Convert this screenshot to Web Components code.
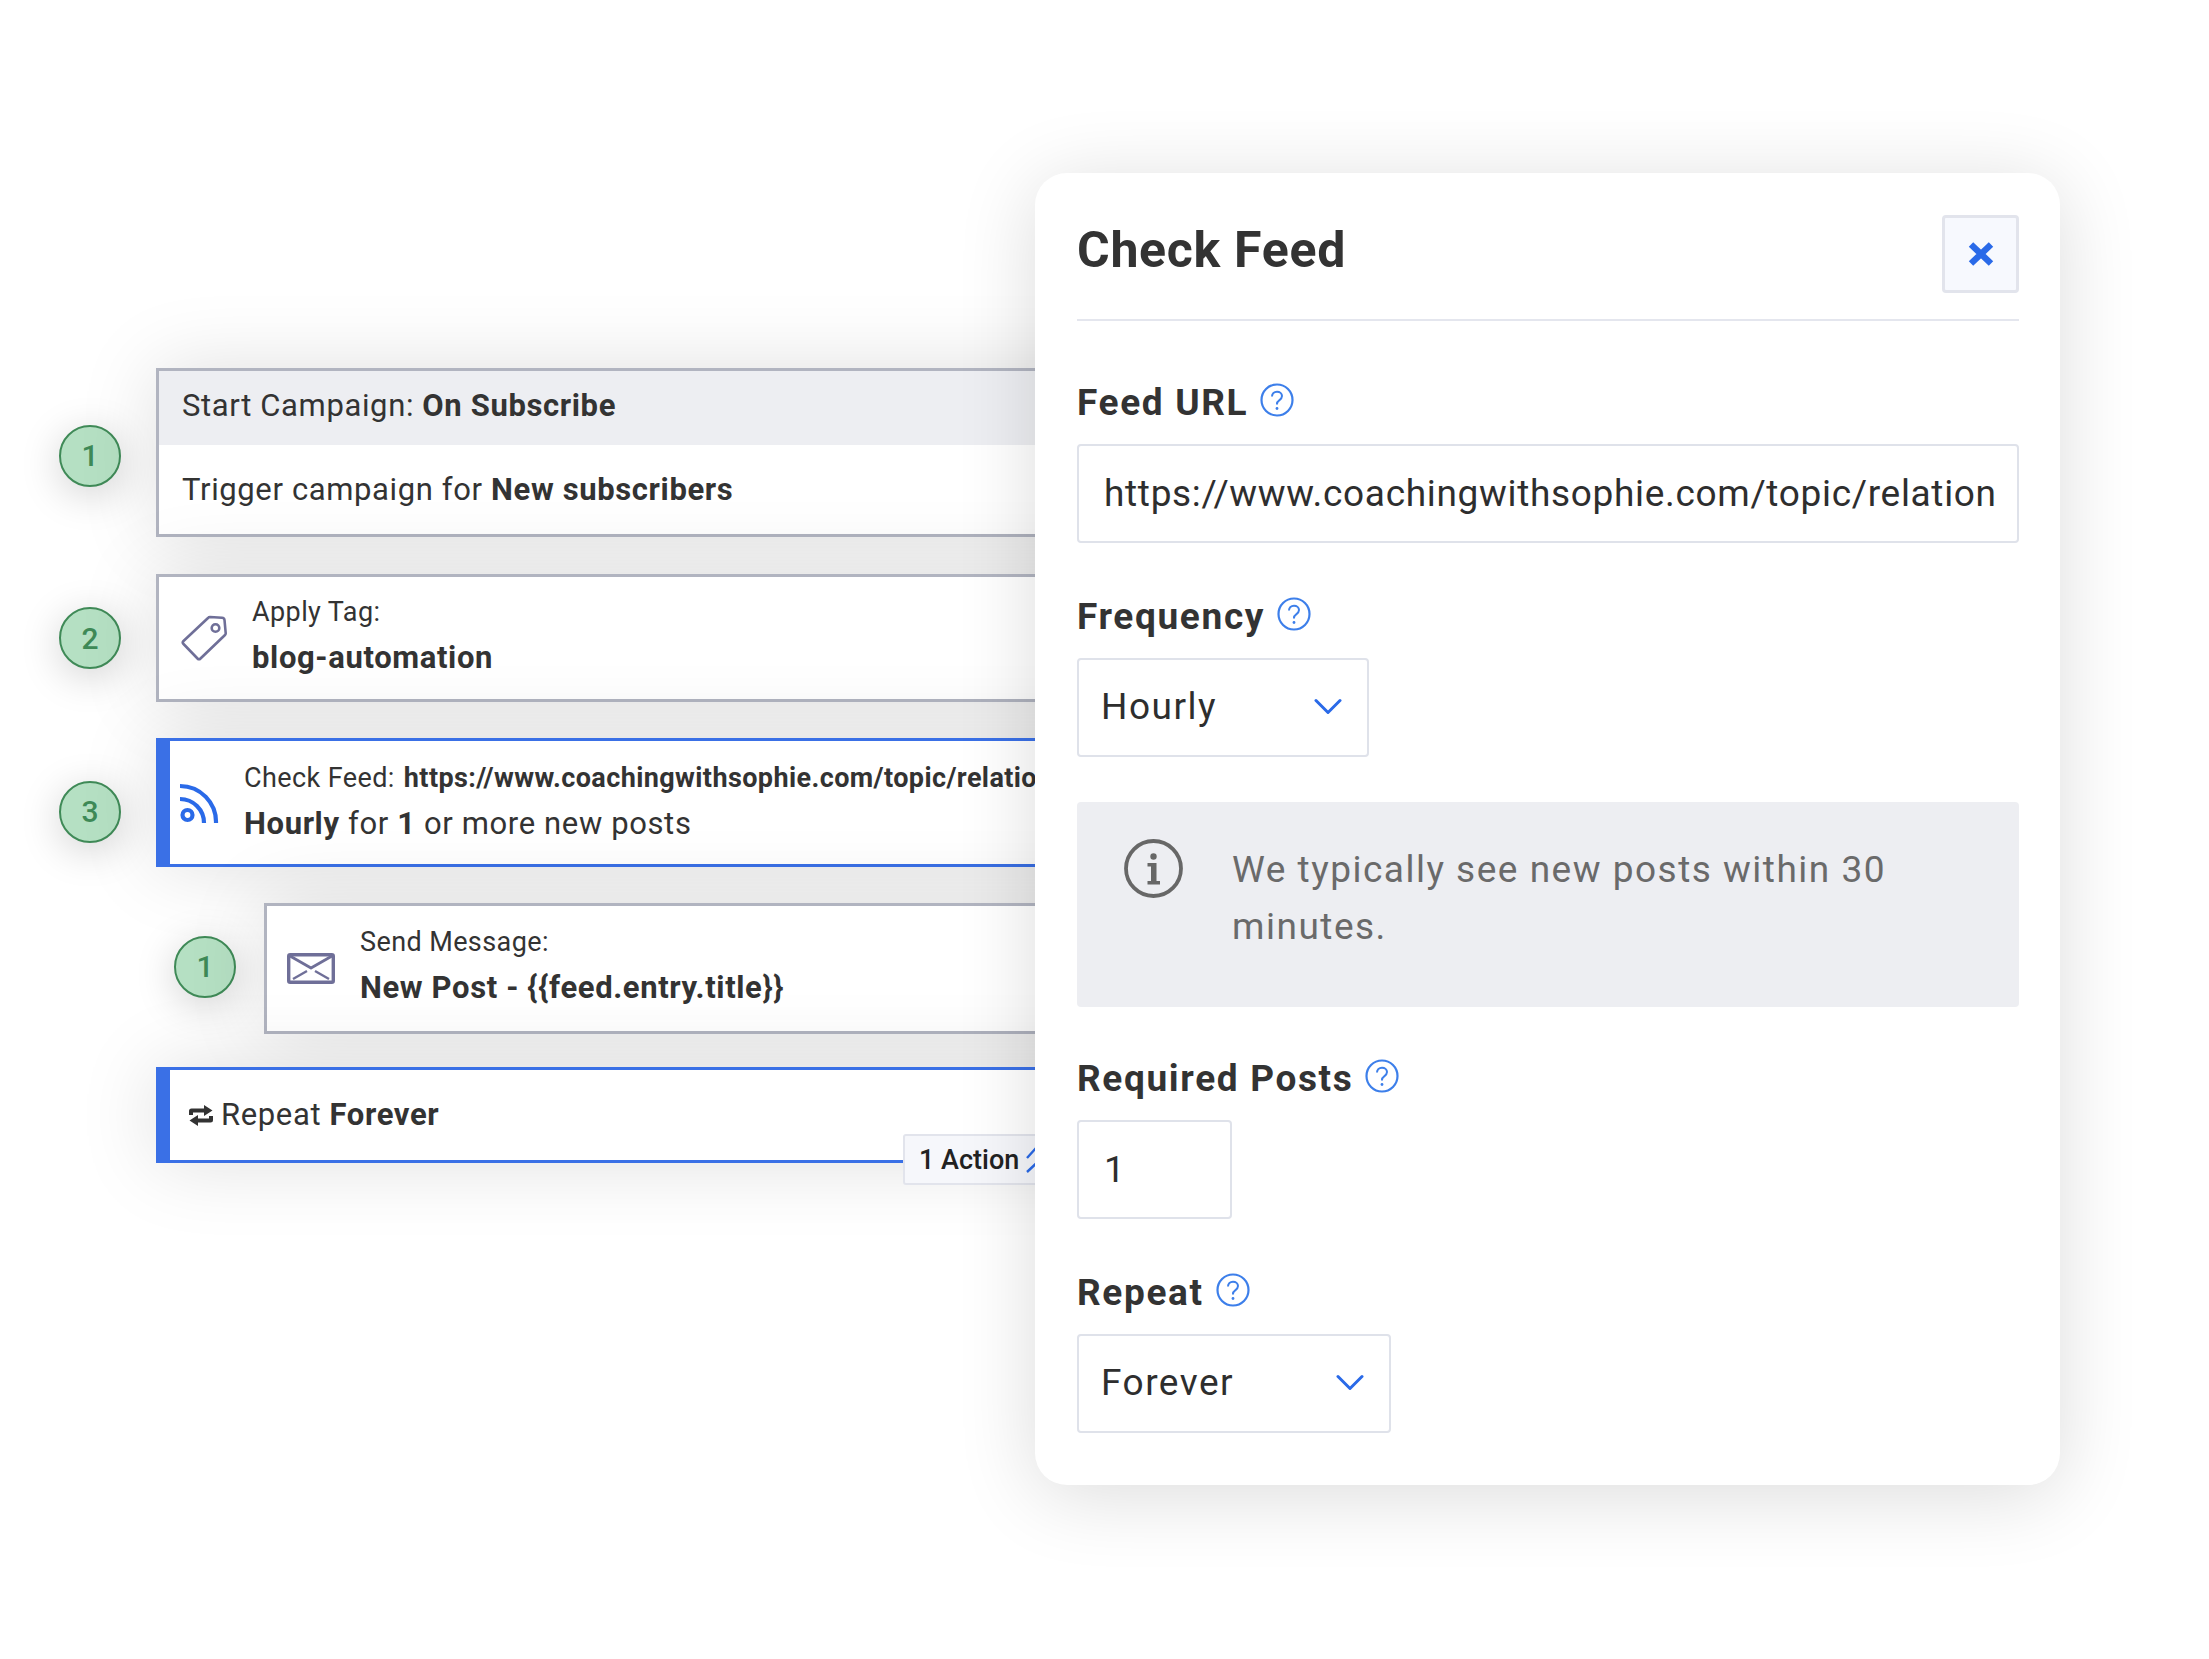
<!DOCTYPE html>
<html>
<head>
<meta charset="utf-8">
<title>Check Feed</title>
<style>
  html, body { margin: 0; background: #fff; }
  body { font-family: Roboto, "Liberation Sans", sans-serif; color: #333; overflow: hidden; }
</style>
</head>
<body>

<flow-canvas>
  <flow-step slot="flow" num="1" shift="3">
    <flow-card height="169" flush>
      <flow-band>Start Campaign: <b>On Subscribe</b></flow-band>
      <flow-text>Trigger campaign for <b>New subscribers</b></flow-text>
    </flow-card>
  </flow-step>
  <flow-step slot="flow" num="2" gap="37">
    <flow-card height="128" icon="tag" lift="7">
      <flow-line size="27">Apply Tag:</flow-line>
      <flow-line size="31" strong>blog-automation</flow-line>
    </flow-card>
  </flow-step>
  <flow-step slot="flow" num="3" gap="36" shift="9">
    <flow-card height="129" icon="rss" active lift="3">
      <flow-line size="27">Check Feed: <b class="url">https://www.coachingwithsophie.com/topic/relation</b></flow-line>
      <flow-line size="31"><b>Hourly</b> for <b>1</b> or more new posts</flow-line>
    </flow-card>
  </flow-step>
  <flow-step slot="flow" num="1" gap="36" nested shift="-2">
    <flow-card height="131" icon="mail" lift="8">
      <flow-line size="27">Send Message:</flow-line>
      <flow-line size="31" strong>New Post - {{feed.entry.title}}</flow-line>
    </flow-card>
  </flow-step>
  <flow-step slot="flow" gap="33">
    <flow-card height="96" active repeat>
      <flow-text>Repeat <b>Forever</b></flow-text>
      <action-badge>1 Action</action-badge>
    </flow-card>
  </flow-step>

  <feed-panel slot="panel" heading="Check Feed">
    <panel-field label="Feed URL" gap="59"><text-box>https://www.coachingwithsophie.com/topic/relation</text-box></panel-field>
    <panel-field label="Frequency" gap="51"><select-box width="292">Hourly</select-box></panel-field>
    <info-note>We typically see new posts within 30 minutes.</info-note>
    <panel-field label="Required Posts" gap="49"><text-box width="155">1</text-box></panel-field>
    <panel-field label="Repeat" gap="51"><select-box width="314">Forever</select-box></panel-field>
  </feed-panel>
</flow-canvas>

<script>
const ICONS = {
  tag: `<svg width="46" height="47" viewBox="0 0 46 47" fill="none" stroke="#6f6f98" stroke-width="2.6" stroke-linejoin="round"><path d="M27 3 2.500 26q-1.500 1.500 0 3l14 14.500q1.500 1.500 3 0L44 20q.8-.8.700-2L43.500 5q-.2-2.200-2.500-2.300L29 2q-1.200 0-2 1Z"/><circle cx="34.500" cy="13" r="3.800"/></svg>`,
  rss: `<svg width="40" height="40" viewBox="0 0 40 40" fill="none" stroke="#2a6ae8" stroke-width="4.200"><path d="M0 3a36 36 0 0 1 36 37"/><path d="M0 16a24 24 0 0 1 24 24"/><circle cx="7.500" cy="32" r="5"/></svg>`,
  mail: `<svg width="48" height="31" viewBox="0 0 48 31" fill="none" stroke="#6f6f98" stroke-linejoin="round"><rect x="1.700" y="1.700" width="44.600" height="27.600" rx="1.500" stroke-width="3.400"/><path d="M3 3 24 15 45 3" stroke-width="2.800"/><path d="M6 26l14-8M42 26l-14-8" stroke-width="2.400"/></svg>`,
  repeat: `<svg width="24" height="21" viewBox="0 0 24 21" fill="#333"><path d="M0 10V6q0-2.500 2.500-2.500H15V0l8.500 5.500L15 11V7.500H4V10Z"/><path d="M24 11v4q0 2.500-2.500 2.500H9V21L.5 15.500 9 10v3.500h11V11Z"/></svg>`,
  help: `<svg width="34" height="34" viewBox="0 0 34 34" fill="none" stroke="#3d7fea" stroke-width="2.200"><circle cx="17" cy="17" r="15.500"/><path d="M12 13.500c0-3 2.200-4.800 5-4.800s5 1.800 5 4.400c0 2.200-1.300 3.200-2.800 4.200-1.500 1-2.200 2-2.200 3.700v.6" stroke-width="2"/><circle cx="17" cy="25.500" r="1.400" fill="#3d7fea" stroke="none"/></svg>`,
  info: `<svg width="59" height="59" viewBox="0 0 59 59" fill="none"><circle cx="29.500" cy="29.500" r="27.500" stroke="#676767" stroke-width="3.800"/><circle cx="29.500" cy="17.500" r="3.200" fill="#676767"/><path d="M23.500 24h9v18h3.500v3.500H23.500V42h3.500V27.500h-3.500Z" fill="#676767"/></svg>`,
  chevron: `<svg width="28" height="17" viewBox="0 0 28 17" fill="none" stroke="#2a6ae8" stroke-width="3" stroke-linecap="round" stroke-linejoin="round"><path d="M2 2.500 14 14.500 26 2.500"/></svg>`,
  close: `<svg width="26" height="24" viewBox="0 0 26 24" fill="none" stroke="#2a6ae8" stroke-width="6.400"><path d="M3 2.500 23 21.500M23 2.500 3 21.500"/></svg>`,
  expand: `<svg width="24" height="26" viewBox="0 0 24 26" fill="none" stroke="#2a6ae8" stroke-width="2.400"><path d="M1 11 10 1M1 25 16 11"/></svg>`
};

function makeShadow(host, html) {
  host.attachShadow({ mode: 'open' });
  host.shadowRoot.innerHTML = html;
}

class FlowCanvas extends HTMLElement {
  constructor() {
    super();
    makeShadow(this, `
      <style>
        :host { display: grid; grid-template-columns: 975px 1025px; padding-left: 60px; width: 2209px; height: 1659px; box-sizing: border-box; overflow: hidden; background: #fff; }
        .flow { display: flex; flex-direction: column; padding-top: 368px; min-width: 0; }
        .panel { position: relative; z-index: 2; padding-top: 173px; }
      </style>
      <div class="flow"><slot name="flow"></slot></div>
      <div class="panel"><slot name="panel"></slot></div>`);
  }
}

class FlowStep extends HTMLElement {
  constructor() {
    super();
    makeShadow(this, `
      <style>
        :host { display: flex; align-items: flex-start; }
        :host([nested]) { padding-left: 114px; }
        .num { flex: none; width: 62px; height: 62px; box-sizing: border-box; margin-left: -1px; margin-right: 35px; border: 2.500px solid #3f8a57; border-radius: 50%; background: #b5e0c3;
               display: flex; align-items: center; justify-content: center; color: #3f8a57; font-size: 30px; font-weight: 500; box-shadow: 0 8px 40px rgba(0,0,0,.18); }
        :host([nested]) .num { margin-left: 0; margin-right: 28px; }
        .num.blank { visibility: hidden; }
        .body { flex: none; width: 1100px; }
        :host([nested]) .body { width: 1000px; }
      </style>
      <div class="num"></div>
      <div class="body"><slot></slot></div>`);
  }
  connectedCallback() {
    const num = this.shadowRoot.querySelector('.num');
    const card = this.querySelector('flow-card');
    const h = Number(card.getAttribute('height'));
    const shift = Number(this.getAttribute('shift') || 0);
    this.style.marginTop = (this.getAttribute('gap') || 0) + 'px';
    num.style.marginTop = ((h - 62) / 2 + shift) + 'px';
    if (this.hasAttribute('num')) num.textContent = this.getAttribute('num');
    else num.classList.add('blank');
  }
}

class FlowCard extends HTMLElement {
  constructor() {
    super();
    makeShadow(this, `
      <style>
        :host { display: block; position: relative; box-sizing: border-box; border: 3px solid #b1b4c0; background: #fff; box-shadow: 0 0 80px rgba(0,0,0,.13); }
        :host([active]) { border-color: #3a70e6; border-left-width: 14px; }
        .wrap { display: flex; align-items: center; height: 100%; box-sizing: border-box; }
        :host([flush]) .wrap { display: block; }
        .icon { flex: none; display: flex; }
        .lines { flex: 1; min-width: 0; display: flex; flex-direction: column; gap: 8px; white-space: nowrap; }
        :host([flush]) .lines { gap: 0; height: 100%; }
        :host([repeat]) .lines { display: block; }
      </style>
      <div class="wrap">
        <div class="icon"></div>
        <div class="lines"><slot></slot></div>
      </div>`);
  }
  connectedCallback() {
    this.style.height = this.getAttribute('height') + 'px';
    const box = this.shadowRoot.querySelector('.icon');
    const name = this.getAttribute('icon');
    if (name === 'tag') { box.innerHTML = ICONS.tag; box.style.margin = '0 25px 0 22px'; }
    if (name === 'rss') { box.innerHTML = ICONS.rss; box.style.margin = '0 24px 0 10px'; }
    if (name === 'mail') { box.innerHTML = ICONS.mail; box.style.margin = '0 25px 0 20px'; }
    if (this.hasAttribute('repeat')) { box.innerHTML = ICONS.repeat; box.style.margin = '0 8px 0 19px'; }
    if (this.hasAttribute('lift')) this.shadowRoot.querySelector('.lines').style.paddingBottom = this.getAttribute('lift') + 'px';
  }
}

class FlowBand extends HTMLElement {
  constructor() {
    super();
    makeShadow(this, `
      <style>
        :host { display: block; box-sizing: border-box; height: 74px; padding-left: 23px; background: #edeef2; font-size: 31px; line-height: 70px; letter-spacing: .63px; color: #333; white-space: nowrap; }
        ::slotted(b) { font-weight: 700; }
      </style>
      <slot></slot>`);
  }
}

class FlowText extends HTMLElement {
  constructor() {
    super();
    makeShadow(this, `
      <style>
        :host { display: block; line-height: 89px; padding-left: 23px; font-size: 31px; letter-spacing: .63px; color: #333; white-space: nowrap; }
        :host-context(flow-card[repeat]) { padding-left: 0; line-height: 90px; }
        ::slotted(b) { font-weight: 700; }
      </style>
      <slot></slot>`);
  }
}

class FlowLine extends HTMLElement {
  constructor() {
    super();
    makeShadow(this, `
      <style>
        :host { display: block; line-height: 38px; letter-spacing: .4px; color: #333; white-space: nowrap; }
        :host([strong]) { font-weight: 700; letter-spacing: .63px; }
        ::slotted(b) { font-weight: 700; }
        ::slotted(b.url) { margin-left: 2px; }
      </style>
      <slot></slot>`);
  }
  connectedCallback() {
    const size = this.getAttribute('size');
    this.style.fontSize = size + 'px';
    if (size === '31') this.style.letterSpacing = '.63px';
  }
}

class ActionBadge extends HTMLElement {
  constructor() {
    super();
    makeShadow(this, `
      <style>
        :host { position: absolute; left: 733px; top: 64px; height: 51px; width: 200px; box-sizing: border-box; padding-left: 14px; display: flex; align-items: center; gap: 7px;
                background: #f6f7fb; border: 2px solid #e2e4ec; border-radius: 3px; color: #222; font-size: 27px; font-weight: 500; white-space: nowrap; }
        .i { display: flex; }
      </style>
      <slot></slot><span class="i">${ICONS.expand}</span>`);
  }
}

class FeedPanel extends HTMLElement {
  constructor() {
    super();
    makeShadow(this, `
      <style>
        :host { display: flex; flex-direction: column; box-sizing: border-box; width: 1025px; height: 1312px; padding: 42px 41px 52px 42px; background: #fff; border-radius: 32px; box-shadow: 0 10px 80px rgba(0,0,0,.14); }
        header { display: flex; justify-content: space-between; align-items: flex-start; height: 104px; border-bottom: 2px solid #e4e6ee; }
        h2 { margin: 2px 0 0; font-size: 50px; line-height: 66px; font-weight: 700; letter-spacing: .7px; color: #333; }
        button { width: 77px; height: 78px; padding: 0; display: flex; align-items: center; justify-content: center; background: #f7f9fe; border: 3px solid #e2e4ec; border-radius: 4px; }
      </style>
      <header><h2></h2><button>${ICONS.close}</button></header>
      <slot></slot>`);
  }
  connectedCallback() {
    this.shadowRoot.querySelector('h2').textContent = this.getAttribute('heading');
  }
}

class PanelField extends HTMLElement {
  constructor() {
    super();
    makeShadow(this, `
      <style>
        :host { display: block; }
        .label { display: flex; align-items: center; gap: 12px; height: 40px; margin-bottom: 24px; font-size: 37px; font-weight: 700; letter-spacing: 1.65px; color: #333; }
        .t { position: relative; top: 2px; }
      </style>
      <div class="label"><span class="t"></span>${ICONS.help}</div>
      <slot></slot>`);
  }
  connectedCallback() {
    this.shadowRoot.querySelector('.t').textContent = this.getAttribute('label');
    this.style.marginTop = this.getAttribute('gap') + 'px';
  }
}

class TextBox extends HTMLElement {
  constructor() {
    super();
    makeShadow(this, `
      <style>
        :host { display: flex; align-items: center; box-sizing: border-box; height: 99px; padding: 0 16px 0 25px; background: #fff; border: 2.500px solid #dfe2ea; border-radius: 4px; font-size: 37px; letter-spacing: .68px; color: #2e2e2e; white-space: nowrap; overflow: hidden; }
      </style>
      <slot></slot>`);
  }
  connectedCallback() {
    if (this.hasAttribute('width')) this.style.width = this.getAttribute('width') + 'px';
  }
}

class SelectBox extends HTMLElement {
  constructor() {
    super();
    makeShadow(this, `
      <style>
        :host { display: flex; align-items: center; justify-content: space-between; box-sizing: border-box; height: 99px; padding: 0 25px 2px 22px; background: #fff; border: 2.500px solid #dfe2ea; border-radius: 4px; font-size: 37px; letter-spacing: 1.5px; color: #2e2e2e; }
        .i { display: flex; }
      </style>
      <span><slot></slot></span><span class="i">${ICONS.chevron}</span>`);
  }
  connectedCallback() {
    this.style.width = this.getAttribute('width') + 'px';
  }
}

class InfoNote extends HTMLElement {
  constructor() {
    super();
    makeShadow(this, `
      <style>
        :host { display: flex; align-items: flex-start; gap: 49px; box-sizing: border-box; height: 205px; margin-top: 45px; padding: 37px 40px 0 47px; background: #edeef2; border-radius: 4px; font-size: 37px; line-height: 57px; letter-spacing: 1.5px; color: #6a6a6a; }
        .i { flex: none; display: flex; }
        .t { margin-top: 2px; }
      </style>
      <span class="i">${ICONS.info}</span><span class="t"><slot></slot></span>`);
  }
}

customElements.define('flow-canvas', FlowCanvas);
customElements.define('flow-step', FlowStep);
customElements.define('flow-card', FlowCard);
customElements.define('flow-band', FlowBand);
customElements.define('flow-text', FlowText);
customElements.define('flow-line', FlowLine);
customElements.define('action-badge', ActionBadge);
customElements.define('feed-panel', FeedPanel);
customElements.define('panel-field', PanelField);
customElements.define('text-box', TextBox);
customElements.define('select-box', SelectBox);
customElements.define('info-note', InfoNote);
</script>
</body>
</html>
